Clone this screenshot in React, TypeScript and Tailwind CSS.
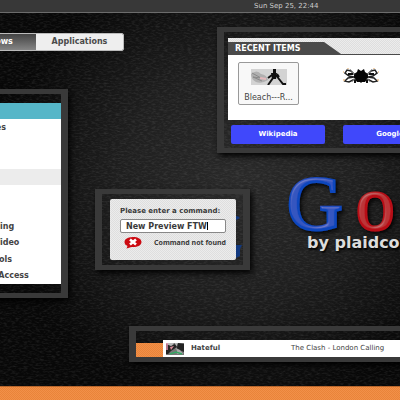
import type { ReactNode } from "react";
import { clsx } from "clsx";

const categories = [
  "Accessories",
  "Games",
  "Graphics",
  "Internet",
  "Office",
  "Other",
  "Programming",
  "Sound & Video",
  "System Tools",
  "Universal Access",
];

const hatch = "bg-[repeating-conic-gradient(#dedede_0_25%,#ececec_0_50%)] bg-[length:2px_2px]";
const orange = "bg-[repeating-conic-gradient(#e98439_0_25%,#f29049_0_50%)] bg-[length:2px_2px]";

function Leather() {
  return (
    <svg className="absolute inset-0 h-full w-full" aria-hidden="true">
      <defs>
        <filter id="leather" x="0" y="0" width="100%" height="100%">
          <feTurbulence type="fractalNoise" baseFrequency="0.25 0.6" numOctaves="2" seed="7" />
          <feColorMatrix values="0 0 0 0 1  0 0 0 0 1  0 0 0 0 1  0.9 0 0 0 -0.38" />
        </filter>
        <radialGradient id="vignette" cx="0.6" cy="0.45" r="0.6">
          <stop offset="0" stopColor="#2a2a2a" />
          <stop offset="0.5" stopColor="#1f1f1f" />
          <stop offset="1" stopColor="#080808" />
        </radialGradient>
      </defs>
      <rect width="100%" height="100%" fill="url(#vignette)" />
      <rect width="100%" height="100%" filter="url(#leather)" opacity="0.22" />
    </svg>
  );
}

function Logo() {
  return (
    <div className="absolute top-[158px] left-[283px] w-64">
      <svg className="block h-16 w-full overflow-visible" viewBox="0 0 256 64" aria-label="Google">
        <defs>
          <filter id="bevel" x="-10%" y="-10%" width="130%" height="130%">
            <feGaussianBlur in="SourceAlpha" stdDeviation="1" result="soft" />
            <feSpecularLighting in="soft" surfaceScale="2" specularConstant="0.15" specularExponent="18" lightingColor="#fff" result="shine">
              <feDistantLight azimuth="240" elevation="45" />
            </feSpecularLighting>
            <feComposite in="shine" in2="SourceAlpha" operator="in" result="edge" />
            <feDropShadow in="SourceGraphic" dx="2" dy="2" stdDeviation="2" floodColor="#000" floodOpacity="0.9" result="base" />
            <feMerge>
              <feMergeNode in="base" />
              <feMergeNode in="edge" />
            </feMerge>
          </filter>
        </defs>
        <g filter="url(#bevel)" fontFamily="'Liberation Serif', serif" fontSize="77" strokeWidth="3">
          <text x="4" y="58" fill="#0b46bd" stroke="#0b46bd">G</text>
          <text x="73" y="58" fill="#b81018" stroke="#b81018">o</text>
        </g>
      </svg>
      <p className="pl-6 text-base leading-4 font-bold text-[#dcdcdc] [text-shadow:1px_2px_2px_#000]">by plaidcow</p>
    </div>
  );
}

function Frame({ className, children }: { className: string; children: ReactNode }) {
  return (
    <section className={clsx("absolute border-x-[7px] border-y-[5px] border-[#393939] shadow-[2px_3px_6px_#000]", className)}>
      {children}
    </section>
  );
}

function CategoryMenu() {
  return (
    <Frame className="top-[76px] -left-[62px] w-[130px] pt-[9px] pb-[9px]">
      <div className="h-4 bg-[#55b6c8]" />
      <ul className="grid h-[165px] grid-rows-10 bg-white text-[8px] font-bold whitespace-nowrap text-[#444]">
        {categories.map((name, i) => (
          <li key={name} className={clsx("flex items-center pt-px pl-2", i === 3 && "bg-[#ececec]")}>
            {name}
          </li>
        ))}
      </ul>
    </Frame>
  );
}

function RecentItems() {
  return (
    <Frame className="top-[14px] left-[217px] w-80 pt-1.5 pb-1 pl-1">
      <div className="bg-white">
        <div className={clsx("border-b border-[#4a4a4a] pt-1", hatch)}>
          <h2 className="w-[113px] bg-[#4a4a4a] pt-px pl-[7px] text-[8px] leading-[11px] font-bold text-white [clip-path:polygon(0_0,85%_0,100%_100%,0_100%)]">
            RECENT ITEMS
          </h2>
        </div>
        <div className="flex h-[65px] items-start gap-8 px-2.5 pt-[7px]">
          <figure className="flex h-[43px] w-[61px] flex-col items-center justify-between rounded-xs border border-[#999] bg-[#f8f8f8] pt-1.5">
            <svg className="h-4 w-9" viewBox="0 0 36 16" aria-hidden="true">
              <rect width="36" height="16" fill="#d3d3d3" />
              <path d="M0 5q6-5 10 0 6 1 7 6-6 4-12 2Q0 10 0 5z" fill="#b0b0b0" />
              <path d="M1 4l9 5-8-1 9 4" stroke="#888" fill="none" />
              <path d="M9 9l6 1" stroke="#e4b9bd" strokeWidth="2" />
              <path d="M22 0h3v4h-3zM20 4h6l-1 6h-4z" fill="#111" />
              <path d="M21 6l-4 3M22 9l-5 7M25 6l3 4 4 5 3 0M26 5l2 3" stroke="#111" strokeWidth="2" fill="none" />
            </svg>
            <figcaption className="text-[8px] leading-3 text-[#444]">Bleach---R...</figcaption>
          </figure>
          <svg className="mt-[6px] ml-3 h-4 w-9" viewBox="0 0 36 16" aria-hidden="true">
            <path d="M14 4l1-3 3 2 3-2 1 3 3 2v4l-3 4h-3l-1 1-1-1h-3l-3-4V6z" fill="#050505" />
            <path d="M12 7L8 3 4 2 2 5l4 3 5 1-6 1-3 3 4 1 6-3M24 7l4-4 4-1 2 3-4 3-5 1 6 1 3 3-4 1-6-3" stroke="#222" strokeWidth="1.5" fill="none" />
            <path d="M7 1l4 5M29 1l-4 5M9 14l3-4M27 14l-3-4" stroke="#999" />
            <path d="M5 6h5M26 6h5M12 12v3M24 12v3" stroke="#111" strokeWidth="2" />
            <path d="M0 12h2M34 12h2M4 0h2M30 0h2M0 4h1M35 4h1" stroke="#e6a65c" />
          </svg>
        </div>
      </div>
      <div className="mt-[5px] grid grid-cols-[94px_94px] gap-[18px] pl-[3px]">
        {["Wikipedia", "Google"].map((site) => (
          <button key={site} className="h-[19px] rounded-xs bg-[#4048fb] text-[7px] font-bold text-white">
            {site}
          </button>
        ))}
      </div>
    </Frame>
  );
}

function CommandDialog() {
  return (
    <Frame className="top-[176px] left-[95px] w-[155px] py-[5px] pr-[7px] pl-2">
      <form className={clsx("h-[61px] rounded-xs px-2.5 pt-1.5 text-[#3a3a3a]", hatch)}>
        <label htmlFor="command" className="block text-[7px] leading-3 font-bold whitespace-nowrap">
          Please enter a command:
        </label>
        <div className="relative mt-0.5 flex h-[14px] items-center rounded-xs border border-[#888] bg-white">
          <input id="command" defaultValue="New Preview FTW" className="w-full pt-px pl-[5px] text-[8px] leading-3 font-bold outline-none" />
          <span className="absolute top-0.5 left-[86px] h-2 w-px bg-black" />
        </div>
        <div className="mt-1 flex items-center justify-between pl-1">
          <svg className="h-3 w-[18px]" viewBox="0 0 18 12" aria-hidden="true">
            <path d="M9 0c5 0 8.500 2 8.500 5S14 10 9 10H7.500L2.500 11.500 3.500 9C1.500 8 .5 7 .5 5 .5 2 4 0 9 0z" fill="#cc0a12" />
            <path d="M6 2.500l6 5M12 2.500l-6 5" stroke="#fff" strokeWidth="2.600" />
          </svg>
          <p className="font-['Noto_Sans',sans-serif] text-[7px] leading-3 font-bold">Command not found</p>
        </div>
      </form>
      <svg className="absolute top-[22px] right-[1px] h-11 w-1.5" viewBox="0 0 6 44" aria-hidden="true">
        <path d="M0 0q3 0 4 2l-4 2zM0 29h6l-2 4v7l-4 2z" fill="#12397f" />
      </svg>
    </Frame>
  );
}

function Player() {
  return (
    <Frame className="top-[313px] left-[129px] w-96 pt-[9px]">
      <div className="flex items-end">
        <div className={clsx("h-[14px] w-[27px]", orange)} />
        <div className="flex h-[17px] flex-1 items-center bg-white pl-[3px] text-[7px] whitespace-nowrap text-[#444]">
          <svg className="h-3 w-[18px]" viewBox="0 0 18 12" aria-hidden="true">
            <rect width="18" height="12" fill="#777" />
            <path d="M0 0h8L5 4 0 6zM9 0h3L9 6z" fill="#b9b9b9" />
            <path d="M0 1l5 2 4-2 2 3-6 4-3 3H0zM12 0l6 1v8l-5-2-3 2z" fill="#242424" />
            <path d="M4 4l4-1-3 4z" fill="#d98a98" />
            <path d="M10 5l4 2 3 4h-6z" fill="#aaa" />
            <path d="M1 0v7" stroke="#e191ab" strokeWidth="1.500" />
            <path d="M4 11l6-2 6 2" stroke="#36a765" strokeWidth="1.500" fill="none" />
          </svg>
          <span className="w-[107px] pl-[7px] font-bold">Hateful</span>
          <span>The Clash - London Calling</span>
        </div>
      </div>
    </Frame>
  );
}

export default function App() {
  return (
    <div className="flex h-screen flex-col overflow-hidden bg-black font-['DejaVu_Sans',sans-serif]">
      <header className="h-[13px] border-b border-[#6c6c6c] bg-[#383838] pl-[254px] text-[7px] leading-3 text-[#ccc]">
        <time>Sun Sep 25, 22:44</time>
      </header>
      <main className="relative flex-1 overflow-hidden">
        <Leather />
        <Logo />
        <nav className="absolute top-5 -left-[52px] flex h-[18px] overflow-hidden rounded-xs border border-[#bbb] text-[8px] font-bold">
          <button className="w-[87px] bg-linear-to-b from-[#444] to-[#858585] text-white">Windows</button>
          <button className="w-[87px] bg-[#eee] text-[#4a4a4a]">Applications</button>
        </nav>
        <CategoryMenu />
        <RecentItems />
        <CommandDialog />
        <Player />
      </main>
      <footer className={clsx("h-[14px] border-t border-[#b8662c]", orange)} />
    </div>
  );
}
